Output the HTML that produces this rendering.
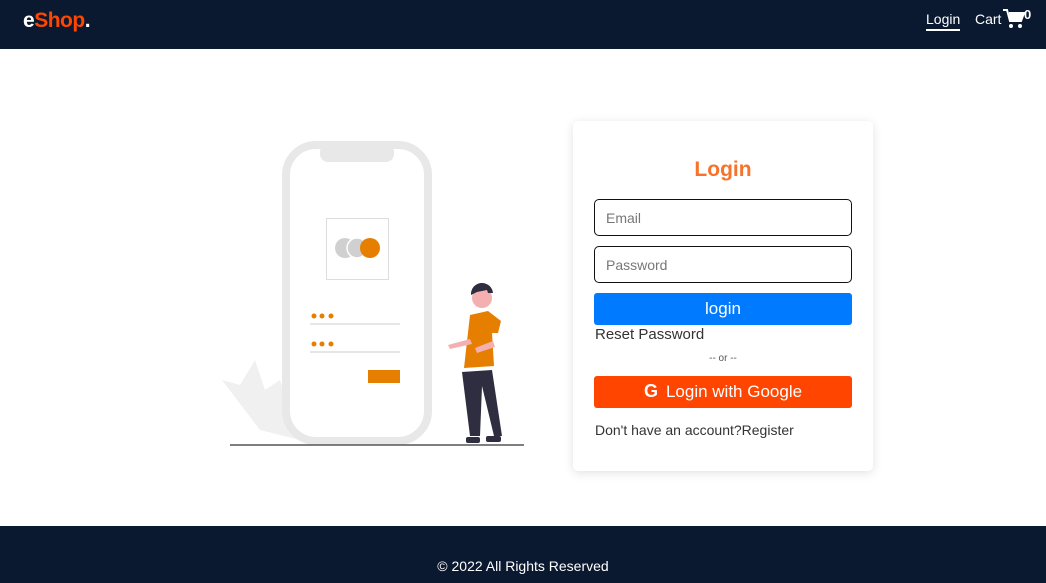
<!DOCTYPE html>
<html><head><style>
*{margin:0;padding:0;box-sizing:border-box}
body{width:1046px;height:583px;font-family:"Liberation Sans",sans-serif;background:#fff;position:relative;overflow:hidden}
header{position:absolute;top:0;left:0;width:1046px;height:49px;background:#0b1930;color:#fff}
.logo{position:absolute;left:23px;top:9px;font-size:21px;font-weight:bold;letter-spacing:-0.5px}
.logo span{color:#ff4500}
.nav{position:absolute;top:11px;font-size:14px}
footer{position:absolute;top:526px;left:0;width:1046px;height:57px;background:#0b1930;color:#fff;font-size:14px;text-align:center;padding-top:32px}
.card{position:absolute;left:573px;top:121px;width:300px;height:350px;background:#fff;border-radius:5px;box-shadow:0 2px 10px rgba(0,0,0,.12)}
.card h2{position:absolute;top:37px;width:100%;text-align:center;color:#f7722a;font-size:21px}
.inp{position:absolute;left:21px;width:258px;height:37px;border:1px solid #111;border-radius:5px;color:#777;font-size:14px;padding:10px 0 0 11px}
.btn{position:absolute;left:21px;width:258px;height:32px;border-radius:3px;color:#fff;font-size:17px;text-align:center;line-height:31px}
.t{position:absolute;left:22px;font-size:14px;color:#333}
</style></head><body>
<header>
<div class="logo">e<span>Shop</span>.</div>
<div class="nav" style="left:926px;border-bottom:2px solid #fff;padding-bottom:2px">Login</div>
<div class="nav" style="left:975px">Cart</div>
<svg style="position:absolute;left:1003px;top:9px" width="22" height="20" viewBox="0 0 22 20"><path d="M0 1h4l3 11h11l3-8H6" fill="none" stroke="#fff" stroke-width="2"/><path d="M6 4h15l-3 8H7z" fill="#fff"/><circle cx="8" cy="17" r="2" fill="#fff"/><circle cx="17" cy="17" r="2" fill="#fff"/></svg>
<div style="position:absolute;left:1024px;top:7px;font-size:13px;font-weight:bold">0</div>
</header>
<svg style="position:absolute;left:220px;top:140px" width="310" height="310" viewBox="0 0 310 310">
<path d="M2 240 L20 245 L35 220 L45 250 L60 240 L80 300 L40 290 Z" fill="#f0f0f0"/>
<rect x="66" y="5" width="142" height="296" rx="30" fill="#fff" stroke="#e8e8e8" stroke-width="8"/>
<rect x="100" y="4" width="74" height="18" rx="8" fill="#e8e8e8"/>
<rect x="208" y="74" width="4" height="32" fill="#e8e8e8"/>
<rect x="106.5" y="78.5" width="62" height="61" fill="#fff" stroke="#ddd"/>
<circle cx="125" cy="108" r="10" fill="#d0d0d0"/><circle cx="137" cy="108" r="10" fill="#d0d0d0" stroke="#fff" stroke-width="1.5"/><circle cx="150" cy="108" r="10" fill="#e67e00"/>
<g fill="#e67e00"><circle cx="94" cy="176" r="2.5"/><circle cx="102" cy="176" r="2.5"/><circle cx="111" cy="176" r="2.5"/><circle cx="94" cy="204" r="2.5"/><circle cx="102" cy="204" r="2.5"/><circle cx="111" cy="204" r="2.5"/><rect x="148" y="230" width="32" height="13"/></g>
<line x1="90" y1="184" x2="180" y2="184" stroke="#ccc"/><line x1="90" y1="212" x2="180" y2="212" stroke="#ccc"/>
<line x1="10" y1="305" x2="304" y2="305" stroke="#555" stroke-width="1.5"/>
<circle cx="262" cy="158" r="10" fill="#f4b0b0"/><path d="M251 155 a11 11 0 0 1 22 -2 l-5 0 l-1 -3 l-10 2z" fill="#2f2e41"/>
<path d="M250 175 l18 -4 l13 10 l-3 12 l-6 0 l2 33 l-30 2 z" fill="#e67e00"/>
<path d="M228 205 l22 -6 l2 5 l-22 5z M255 208 l18 -7 l2 6 l-18 6z" fill="#f4b0b0"/>
<path d="M242 232 l30 -2 l10 66 l-8 0 l-12 -50 l-2 50 l-10 0z" fill="#2f2e41"/>
<rect x="246" y="297" width="14" height="6" rx="2" fill="#2f2e41"/><rect x="266" y="296" width="15" height="6" rx="2" fill="#2f2e41"/>
</svg>
<div class="card">
<h2>Login</h2>
<div class="inp" style="top:78px">Email</div>
<div class="inp" style="top:125px">Password</div>
<div class="btn" style="top:172px;background:#007bff">login</div>
<div class="t" style="top:205px;font-size:15px">Reset Password</div>
<div style="position:absolute;top:232px;width:100%;text-align:center;font-size:10px;color:#555">-- or --</div>
<div class="btn" style="top:255px;background:#ff4500"><b style="font-size:18px;margin-right:8px">G</b>Login with Google</div>
<div class="t" style="top:301px">Don't have an account?Register</div>
</div>
<footer>© 2022 All Rights Reserved</footer>
</body></html>
